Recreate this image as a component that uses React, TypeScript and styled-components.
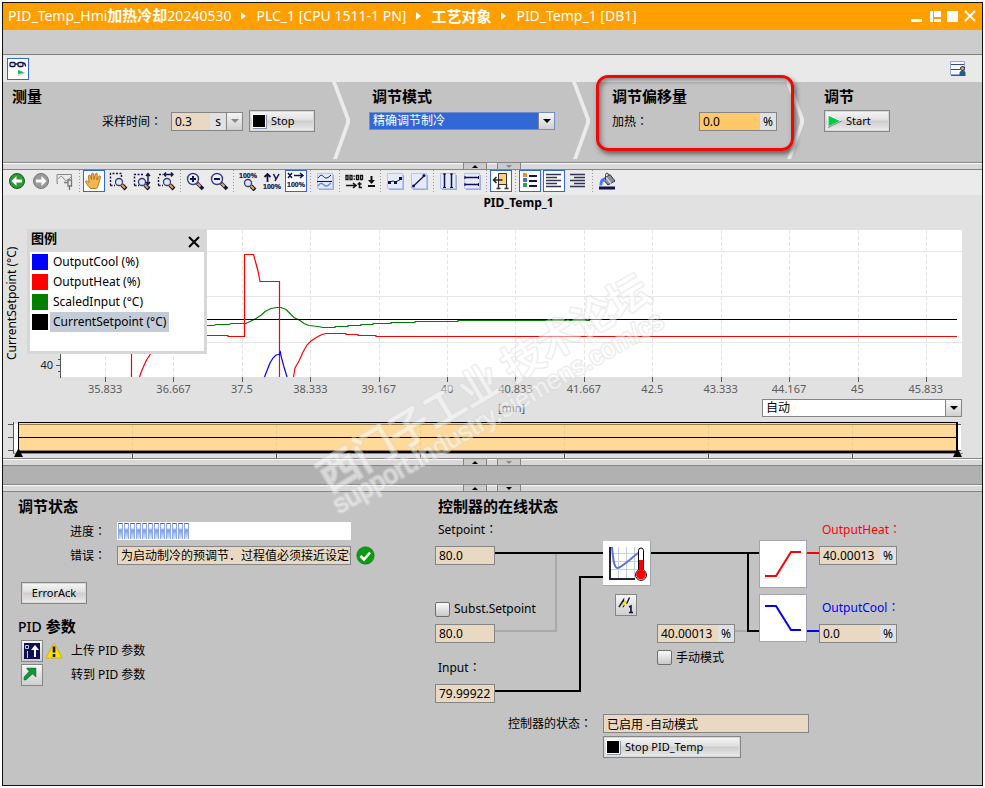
import React from "react";
import styled, { createGlobalStyle, css } from "styled-components";

const latin = `"Noto Sans", "Noto Sans CJK SC", sans-serif`;

const GlobalStyle = createGlobalStyle`
  * { box-sizing: border-box; }
  body { margin: 0; background: #fff; color: #000; font: 12px/16px ${latin}; }
  button, input, select { font: inherit; color: inherit; margin: 0; padding: 0; border-radius: 0; }
  svg { display: block; }
`;

/* ---------- frame ---------- */
const Frame = styled.main`
  position: relative;
  display: flex;
  flex-direction: column;
  margin: 2px;
  min-height: calc(100vh - 4px);
  border: 1px solid #111;
  background: #c3c3c3;
  overflow: hidden;
`;
const Page = styled.div`
  display: flow-root;
`;
const TitleBar = styled.header`
  display: flex;
  align-items: center;
  height: 27px;
  padding: 0 3px 2px 5px;
  background: #ff9f00;
  color: #fff;
  font-size: 14px;
  white-space: nowrap;
`;
const Crumbs = styled.nav`
  display: flex;
  align-items: center;
  gap: 10px;
  flex: 1;
`;
const Cjk = styled.span`
  font-size: 15px;
  font-weight: 700;
`;
const WindowButtons = styled.div`
  display: flex;
  gap: 2px;
`;
const WindowButton = styled.button`
  width: 16px;
  height: 16px;
  border: 0;
  background: none;
`;
const MenuStrip = styled.div`
  height: 25px;
  background: #ccc;
  border-bottom: 1px solid #808080;
`;
const TopTools = styled.div`
  display: flex;
  justify-content: space-between;
  align-items: center;
  height: 27px;
  padding: 0 16px 0 4px;
  background: #e9e9e9;
`;

/* ---------- shared controls ---------- */
const ToolButton = styled.button<{ $on?: boolean; $narrow?: boolean }>`
  flex: none;
  display: grid;
  place-items: center;
  width: ${(p) => (p.$narrow ? 10 : 22)}px;
  height: 22px;
  border: 1px solid ${(p) => (p.$on ? "#3168d5" : "transparent")};
  background: ${(p) => (p.$on ? "#fff" : "none")};
`;
const PushButton = styled.button<{ $w: number }>`
  display: flex;
  align-items: center;
  gap: 4px;
  width: ${(p) => p.$w}px;
  height: 22px;
  padding: 0 2px;
  border: 1px solid #858585;
  background: linear-gradient(#f6f6f6, #e0e0e0 45%, #cdcdcd 50%, #ececec);
  box-shadow: inset 0 0 0 1px #d8d8d8;
  font-size: 11px;
  white-space: nowrap;
`;
const CenterButton = styled(PushButton)`
  justify-content: center;
`;
const SmallButton = styled.button`
  display: grid;
  place-items: center;
  width: 22px;
  height: 22px;
  border: 1px solid #858585;
  background: linear-gradient(#f6f6f6, #cfcfcf);
`;
const Field = styled.span<{ $w: number; $hot?: boolean }>`
  display: flex;
  flex: none;
  width: ${(p) => p.$w}px;
  height: 19px;
  border: 1px solid #858585;
  background: ${(p) => (p.$hot ? "#ffc869" : "#ead9c2")};
  input {
    flex: 1;
    min-width: 0;
    width: 0;
    height: 17px;
    padding: 0 0 0 3px;
    border: 0;
    background: none;
    outline: 0;
  }
`;
const Unit = styled.span`
  width: 16px;
  text-align: center;
  background: #e1e1e1;
  line-height: 17px;
`;
const DropButton = styled.button`
  display: grid;
  place-items: center;
  width: 16px;
  border: 0;
  border-left: 1px solid #858585;
  background: linear-gradient(#f4f4f4, #d0d0d0);
`;
const SelectBox = styled.span<{ $w: number; $blue?: boolean }>`
  position: relative;
  display: block;
  width: ${(p) => p.$w}px;
  height: 18px;
  select {
    appearance: none;
    width: 100%;
    height: 100%;
    padding: 0 20px 0 3px;
    border: 1px solid #858585;
    background: #fff;
    line-height: 16px;
    outline: 0;
    ${(p) =>
      p.$blue &&
      css`
        border-color: #6f8fd0;
        background: #3168d5;
        color: #fff;
      `}
  }
  > span {
    position: absolute;
    top: 1px;
    right: 1px;
    bottom: 1px;
    width: 16px;
    display: grid;
    place-items: center;
    border-left: 1px solid #858585;
    background: linear-gradient(#f8f8f8, #d0d0d0);
    pointer-events: none;
  }
`;
const Heading = styled.h2`
  margin: 0;
  font-size: 15px;
  line-height: 20px;
  font-weight: 700;
  white-space: nowrap;
`;
const Light = styled.span`
  font-size: 14px;
  font-weight: 500;
`;
const Label = styled.label<{ $color?: string }>`
  color: ${(p) => p.$color || "#000"};
  white-space: nowrap;
`;
const ColonMark = styled.span`
  font-family: "Noto Sans CJK TC", sans-serif;
`;
const Check = styled.input.attrs({ type: "checkbox" })`
  appearance: none;
  width: 15px;
  height: 15px;
  border: 1px solid #6e6e6e;
  border-radius: 2px;
  background: linear-gradient(#fafafa, #c8c8c8);
`;
const Colon = () => <ColonMark>：</ColonMark>;
const Down = ({ c = "#000" }: { c?: string }) => (
  <svg width="8" height="4" viewBox="0 0 8 4">
    <path d="M0 0h8L4 4z" fill={c} />
  </svg>
);

/* ---------- configuration strip ---------- */
const ConfigStrip = styled.section`
  display: flex;
  height: 80px;
  background: #c3c3c3;
`;
const Step = styled.div<{ $w?: number; $pad: number }>`
  position: relative;
  flex: ${(p) => (p.$w ? `0 0 ${p.$w}px` : "1")};
  padding: 4px 0 0 ${(p) => p.$pad}px;
`;
const StepRow = styled.div<{ $indent?: number }>`
  display: flex;
  align-items: center;
  height: 22px;
  margin-top: 4px;
  padding-left: ${(p) => p.$indent || 0}px;
`;
const ModeBlock = styled.div`
  ${Heading} { padding-left: 3px; }
`;
const LabelCell = styled.div<{ $w: number }>`
  width: ${(p) => p.$w}px;
`;
const Spacer = styled.span`
  width: 6px;
`;
const Callout = styled.div`
  position: absolute;
  left: 4px;
  top: -7px;
  width: 198px;
  height: 76px;
  border: 3px solid #f00808;
  border-radius: 12px;
  box-shadow: 2px 3px 5px rgba(0, 0, 0, 0.5), inset 2px 3px 5px rgba(0, 0, 0, 0.4);
  pointer-events: none;
`;
const Chevron = () => (
  <svg width="20" height="80" viewBox="0 0 20 80">
    <path d="M0 0h4l14 37v4L5 77H1l13-36v-4z" fill="#ebebeb" />
  </svg>
);

/* ---------- splitter ---------- */
const SplitBar = styled.div`
  display: flex;
  gap: 10px;
  height: 8px;
  padding-left: 460px;
  border-top: 1px solid #858585;
  border-bottom: 1px solid #858585;
  background: #d9d9d9;
  box-shadow: inset 0 1px #fff;
`;
const SplitTab = styled.button`
  display: grid;
  place-items: center;
  width: 24px;
  height: 6px;
  border: solid #858585;
  border-width: 0 1px;
  background: #cbcbcb;
`;
const Splitter = ({ both }: { both?: boolean }) => (
  <SplitBar>
    <SplitTab aria-label="Collapse">
      <svg width="6" height="3"><path d="M0 3h6L3 0z" /></svg>
    </SplitTab>
    <SplitTab aria-label="Expand">
      <svg width="6" height="3"><path d="M0 0h6L3 3z" fill={both ? "#000" : "#888"} /></svg>
    </SplitTab>
  </SplitBar>
);
const GrayBand = styled.div`
  height: 18px;
  background: #b1b1b1;
`;

/* ---------- chart ---------- */
const ChartTools = styled.div`
  display: flex;
  align-items: flex-start;
  gap: 2px;
  height: 25px;
  padding-left: 3px;
  background: #ebebeb;
`;
const Sep = styled.i`
  width: 3px;
  height: 24px;
  background: repeating-linear-gradient(#999 0 1px, transparent 1px 3px) center / 1px 100% no-repeat;
`;
const ChartPanel = styled.section`
  height: 263px;
  background: #e1e1e1;
`;
const ChartTitle = styled.h3`
  margin: 0;
  height: 35px;
  padding: 0 0 0 52px;
  text-align: center;
  font-size: 12px;
  line-height: 15px;
  font-weight: 700;
`;
const PlotRow = styled.div`
  position: relative;
  display: flex;
  height: 152px;
  padding-right: 20px;
`;
const Gutter = styled.div`
  display: flex;
  width: 58px;
`;
const AxisName = styled.div`
  writing-mode: vertical-rl;
  transform: rotate(180deg);
  width: 17px;
  height: 146px;
  text-align: center;
  line-height: 17px;
  white-space: nowrap;
`;
const AxisTick = styled.div`
  align-self: flex-end;
  display: flex;
  flex: 1;
  align-items: center;
  justify-content: flex-end;
  gap: 2px;
  height: 34px;
  font-size: 11px;
  color: #222;
`;
const Plot = styled.svg`
  flex: 1;
  min-width: 0;
  height: 152px;
`;
const TickLabels = styled.div`
  display: grid;
  grid-template-columns: repeat(13, 1fr);
  margin: 0 22px 0 68px;
  height: 16px;
  text-align: center;
  font-size: 11px;
  line-height: 14px;
  color: #5c5c5c;
`;
const BelowAxis = styled.div`
  display: grid;
  grid-template-columns: 1fr auto 1fr;
  align-items: center;
  height: 20px;
  padding: 0 20px 0 58px;
  color: #5c5c5c;
  font-size: 11px;
  > :last-child { justify-self: end; color: #000; font-size: 12px; }
`;
const Overview = styled.svg`
  width: calc(100% - 24px);
  height: 37px;
  margin: 3px 0 0 5px;
`;
const Legend = styled.aside`
  position: absolute;
  left: 24px;
  top: -1px;
  width: 180px;
  height: 125px;
  border: 3px solid #d7d7d7;
  background: #fff;
`;
const LegendHead = styled.div`
  display: flex;
  justify-content: space-between;
  height: 20px;
  padding: 0 4px 0 1px;
  background: #d7d7d7;
  font-size: 13px;
  font-weight: 700;
  line-height: 12px;
  button { border: 0; background: none; height: 20px; }
`;
const LegendItem = styled.div<{ $c: string; $on?: boolean }>`
  display: flex;
  align-items: center;
  height: 20px;
  padding-left: 2px;
  gap: 2px;
  &::before { content: ""; width: 16px; height: 16px; background: ${(p) => p.$c}; }
  span { padding: 2px 3px; ${(p) => p.$on && "background: #c3cbd6;"} }
`;

const ticksX = [105, 173, 242, 310, 379, 447, 515, 584, 652, 721, 789, 858, 926];
const tickNames = ["35.833", "36.667", "37.5", "38.333", "39.167", "40", "40.833", "41.667", "42.5", "43.333", "44.167", "45", "45.833"];
const series = [
  { c: "#007f00", d: "M206 325.5L214 325.5 216 324.5 229 324.5 231 323.5 246 323.5 248 322.5 256 318.5 262 314.5 265 311.5 271 308.5 277 307.5 281 307.5 286 309.5 290 313.5 294 317.5 300 320.5 304 323.5 309 325.5 318 326.5 323 327.5 335 327.5V326.5H348V325.5H361V324.5H373V323.5H391V322.5H415V321.5H458V320.5H590" },
  { c: "#000", d: "M206 319.5H957" },
  { c: "#f00", d: "M131.5 350V377M139.5 377L142 370 146 361 151 353M206 335.5H228V336.5H244.5V254.5H253.5L255 260 258 271 260 281.5H279.5V377M293.5 377L295 368 299 361 303 352 307 345 311 341 317 337 322 334.5 326 333.5H346V334.5H358V335.5H376V336.5H957" },
  { c: "#00f", d: "M264.5 377L268 368 270 363 273 358 276 355 279 354.5 280.5 352 281 356 284 367 287 377" },
];

const Trend = () => (
  <Plot viewBox="61 230 901 152" preserveAspectRatio="none" role="img" aria-label="PID_Temp_1">
    <rect x="61" y="230" width="901" height="147" fill="#fff" />
    <g stroke="#e6e6e6" fill="none">
      <path d="M61 251.5H962M61 296.5H962M61 342.5H962" />
      {ticksX.map((x) => <path key={x} d={`M${x + 0.5} 230V377`} strokeDasharray="4 2" />)}
    </g>
    {ticksX.map((x) => <path key={x} d={`M${x + 0.5} 377V382`} stroke="#555" />)}
    {series.map((s) => <path key={s.c} d={s.d} stroke={s.c} fill="none" vectorEffect="non-scaling-stroke" strokeWidth="1.2" />)}
  </Plot>
);

const OverviewStrip = () => (
  <Overview viewBox="8 421 955 37" preserveAspectRatio="none">
    <path d="M14 424H961V451H14z" fill="#fff" />
    <path d="M13.5 422V453M8 424.5H14M8 437.5H14M8 450.5H14M957 424.5H961M957 450.5H961" stroke="#555" fill="none" />
    <path d="M18 422H957V451H18z" fill="#ffd997" />
    {[132, 276, 420, 564, 708, 852].map((x) => (
      <g key={x} fill="none">
        <path d={`M${x + 0.5} 424V451`} stroke="#f0c98c" strokeDasharray="4 2" />
        <path d={`M${x + 0.5} 453V458`} stroke="#555" />
      </g>
    ))}
    <path d="M18 424.5H957M18 450.5H957" stroke="#9a7848" />
    <path d="M13 453.5H963" stroke="#888" />
    <path d="M18 422.5H957M18 437.5H957M18.5 422V452" stroke="#000" />
    <path d="M18 452H957M957 422V452" stroke="#000" strokeWidth="2" />
    <path d="M14 457l4.500-9 4.500 9zM953 457l4.500-9 4.500 9z" />
  </Overview>
);

/* ---------- toolbar icons ---------- */
const Ico = ({ children }: { children: React.ReactNode }) => (
  <svg width="20" height="20" viewBox="0 0 20 20" fill="none" stroke="#12124a">{children}</svg>
);
const Percent = ({ x, y }: { x: number; y: number }) => (
  <text x={x} y={y} fontFamily="Liberation Sans" fontWeight="700" fontSize="7" fill="#12124a" stroke="#12124a" strokeWidth="0.2">100%</text>
);
const Lens = ({ x, y }: { x: number; y: number }) => (
  <g transform={`translate(${x} ${y})`}>
    <path d="M3 3l4 4" stroke="#12124a" strokeWidth="4" />
    <path d="M3 3l3 3" stroke="#e2a52c" strokeWidth="2.200" />
    <circle r="3.500" fill="#dce9fb" stroke="#3b3b6d" strokeWidth="1.300" />
  </g>
);
const Magnify = ({ plus }: { plus?: boolean }) => (
  <Ico>
    <path d="M12 12l6 6" stroke="#12124a" strokeWidth="3.600" />
    <path d="M12.500 12.500l3 3" stroke="#e2a52c" strokeWidth="2.400" />
    <circle cx="8" cy="8" r="5.500" fill="#e8f0fc" stroke="#3b3b7d" strokeWidth="1.400" />
    <path d={plus ? "M5 8h6M8 5v6" : "M5 8h6"} strokeWidth="2" />
  </Ico>
);
const Arrow = ({ c, flip }: { c: string; flip?: boolean }) => (
  <Ico>
    <circle cx="10" cy="10" r="7.500" fill={c} stroke={flip ? "#777" : "#175c17"} />
    <path d={flip ? "M15.500 10L10.500 5v3.500H5v3h5.500V15z" : "M4.500 10L9.500 5v3.500h5.500v3h-5.500V15z"} fill="#fff" stroke="none" />
  </Ico>
);
const Tile = () => (
  <>
    <path d="M4 4h15v15H4z" fill="#a5acd0" stroke="none" />
    <path d="M2.500 2.500h15v15h-15z" fill="#e3ebfc" stroke="#b4c4ee" />
  </>
);
const GlassesIcon = () => (
  <Ico>
    <rect x="2" y="3.500" width="5" height="4" rx="1" fill="#dfe6fa" strokeWidth="1.300" />
    <rect x="10" y="3.500" width="5" height="4" rx="1" fill="#dfe6fa" strokeWidth="1.300" />
    <path d="M7 5h3M15 4c2 0 2.500 1 2.500 3.500" strokeWidth="1.300" />
    <path d="M10 11l8 3-8 3z" fill="#ccc" stroke="none" />
    <path d="M10 11l6 2.500-6 1.500z" fill="#0dbb55" stroke="none" />
  </Ico>
);
const tools: Array<{ n: string; on?: boolean; narrow?: boolean; icon: React.ReactNode } | null> = [
  { n: "Back", icon: <Arrow c="#2f9a35" /> },
  { n: "Forward", icon: <Arrow c="#9a9a9a" flip /> },
  { n: "Pin curve", icon: <Ico><path d="M3 12.500H2V3.500h14.500V8M3 8c3-4 4-3 6 0s4 1 7-2" stroke="#888" /><path d="M9 11.500h4M13 9v6h3.500V9zM14.500 15v4" stroke="#777" strokeWidth="1.300" /></Ico> },
  null,
  { n: "Move view", on: true, icon: <Ico><path d="M6.500 17.500C4 14.500 2 12.500 1.500 10.500c.7-1 2-.7 3.500 1L4.500 5c.1-1.300 1.600-1.300 2 0l1 3.500L7.700 3c.2-1.300 1.800-1.300 2 0l.3 5.500L11.500 3c.4-1.300 1.900-1 1.900.4L12.800 9l1.900-3.500c.7-1.200 2.200-.5 1.800.7L14.500 13c-.3 2-1 3.500-2 4.500z" fill="#f4b64f" stroke="#a96d17" strokeWidth=".9" /></Ico> },
  { n: "Zoom area", icon: <Ico><path d="M2.500 14.500V2.500H13.500V7M2.500 14.500H7" strokeDasharray="2 1.500" strokeWidth="1.400" /><Lens x={11} y={11} /></Ico> },
  { n: "Zoom vertical", icon: <Ico><path d="M2.500 14.500V3.500H12M2.500 14.500H7" strokeDasharray="2 1.500" strokeWidth="1.400" /><Lens x={10} y={11} /><path d="M16 3v10M14 5l2-2.500L18 5M14 11l2 2.500 2-2.500" strokeWidth="1.400" /></Ico> },
  { n: "Zoom horizontal", icon: <Ico><path d="M2.500 14.500V6M2.500 14.500H7M3 3.500h4" strokeDasharray="2 1.500" strokeWidth="1.400" /><Lens x={11} y={11} /><path d="M8 3.500h9M10 1.500L8 3.500l2 2M15 1.500l2 2-2 2" strokeWidth="1.400" /></Ico> },
  null,
  { n: "Zoom in", icon: <Magnify plus /> },
  { n: "Zoom out", icon: <Magnify /> },
  null,
  { n: "Zoom 100%", icon: <Ico><Percent x={1} y={7} /><Lens x={10} y={12} /></Ico> },
  { n: "Y 100%", icon: <Ico><path d="M5.500 11V4M2.500 6l3-3 3 3" strokeWidth="1.800" /><path d="M11.500 3l2.500 5M17 3l-4 7" strokeWidth="1.500" /><Percent x={1} y={18} /></Ico> },
  { n: "X 100%", on: true, icon: <Ico><path d="M2 2l4 5M6 2L2 7M8 4.500h8M14 2l3 2.500L14 7" strokeWidth="1.500" /><Percent x={1} y={16} /></Ico> },
  null,
  { n: "Curves", icon: <Ico><Tile /><path d="M3 7c3-4 4-3 6-1s4 1 7-2" /><path d="M2 10.500h15" stroke="#12124a" /><path d="M3 15c3-4 4-3 6-1s4 1 7-2" stroke="#6a8ae6" strokeWidth="1.400" /></Ico> },
  null,
  { n: "Time axis", icon: <Ico><path d="M2 4.500v4h2v-4zM6 4.500v4h2v-4zM12.500 4.500v4h2v-4zM16.500 4.500v4h2v-4z" stroke="#111" strokeWidth="1.300" /><path d="M10.300 4.500v1.200M10.300 7.500v1.200M2 14.500h9M9 12l3 2.500L9 17M15.500 11v5.500h2.500M13.500 13h4" stroke="#111" strokeWidth="1.600" /></Ico> },
  { n: "Time marker", narrow: true, icon: <svg width="8" height="20" viewBox="0 0 8 20"><path d="M2.500 5h2v4H7l-3.500 4L0 9h2.500zM0 14h7v2H0z" fill="#111" /></svg> },
  null,
  { n: "Interpolate points", icon: <Ico><Tile /><path d="M4 11l4-1 3 1 5-3" /><path d="M3 10h3v3H3zM9 10h3v3H9zM14 6h3v3h-3z" fill="#12124a" stroke="none" /></Ico> },
  { n: "Interpolate line", icon: <Ico><Tile /><path d="M4.500 15L15 5" strokeWidth="1.300" /><circle cx="4.500" cy="15" r="1.500" fill="#12124a" stroke="none" /><circle cx="15" cy="4.500" r="1.500" fill="#12124a" stroke="none" /></Ico> },
  null,
  { n: "Vertical cursors", icon: <Ico><Tile /><path d="M6.500 2.500v14M13.500 2.500v14" strokeWidth="1.500" /><path d="M5 3h3M12 3h3M5 16.500h3M12 16.500h3" /></Ico> },
  { n: "Horizontal cursors", icon: <Ico><Tile /><path d="M2.500 6.500h14M2.500 13.500h14" strokeWidth="1.500" /><path d="M3 5v3M16.500 5v3M3 12v3M16.500 12v3" /></Ico> },
  null,
  { n: "Dock legend", on: true, icon: <Ico><path d="M7.500 2.500h8v11h-8z" fill="#ffcf83" stroke="#333" /><path d="M7.500 13v4M15.500 13v4M5.500 17.500h4M13.500 17.500h4" stroke="#333" strokeWidth="1.400" /><path d="M2.500 9h9M5.500 6L2.500 9l3 3" stroke="#222" strokeWidth="1.500" /></Ico> },
  null,
  { n: "Legend", on: true, icon: <Ico><path d="M3 2h4v4H3z" fill="#f68a1e" stroke="none" /><path d="M3 7h4v4H3z" fill="#2b7be0" stroke="none" /><path d="M3 12h4v4H3z" fill="#27a353" stroke="none" /><path d="M9 5h8M9 10h8M9 15h8" strokeWidth="2" /></Ico> },
  { n: "Align left", on: true, icon: <Ico><path d="M2 3.500h15M2 6.500h11M2 9.500h15M2 12.500h11M2 15.500h15" stroke="#333355" strokeWidth="1.400" /></Ico> },
  { n: "Align right", icon: <Ico><path d="M2 3.500h15M6 6.500h11M2 9.500h15M6 12.500h11M2 15.500h15" stroke="#333355" strokeWidth="1.400" /></Ico> },
  null,
  { n: "Background colour", icon: <Ico><path d="M2 17h16" strokeWidth="3" /><path d="M6 8l7-4.500 5 6.500-7 4z" fill="#8a8f9c" stroke="#33384a" /><path d="M9 6.500l5 6" stroke="#d5d8e0" strokeWidth="1.400" /><path d="M8.500 9V4.500q0-2.500 1.500-2.500t1.500 2.500" stroke="#444" /><path d="M7 7C3.500 7.500 3 9 2.500 14.500h2.500C5.500 11.500 6 10.500 8.500 10z" fill="#4d77ee" stroke="none" /></Ico> },
];

/* ---------- status panels ---------- */
const Bottom = styled.div`
  display: flex;
  flex: 1;
`;
const StatusColumn = styled.section`
  width: 432px;
  padding: 4px 0 0 15px;
`;
const StatusRows = styled.div`
  margin-top: 3px;
`;
const StatusRow = styled.div`
  display: grid;
  grid-template-columns: 99px 234px 24px;
  align-items: center;
  height: 24px;
  > label, > span:first-child { padding-left: 52px; white-space: nowrap; }
  > svg { justify-self: end; }
`;
const Progress = styled.div`
  display: flex;
  gap: 1px;
  height: 18px;
  padding: 1px;
  background: #fff;
  i { width: 5px; border: solid #8eaae6; border-width: 1px 1px 0; border-top-color: #3168d5; background: linear-gradient(#fff 0 25%, #7a9ce4 40%, #dfe8fb); }
`;
const AckRow = styled.div`
  margin: 15px 0 12px 3px;
`;
const Actions = styled.div`
  margin-top: 2px;
`;
const ActionRow = styled.div`
  display: flex;
  align-items: center;
  height: 24px;
  padding-left: 3px;
`;
const ActionLabel = styled.span<{ $gap: number }>`
  margin-left: ${(p) => p.$gap}px;
`;
const Diagram = styled.section`
  position: relative;
  flex: 1;
`;
const Node = styled.div<{ $x: number; $y: number }>`
  position: absolute;
  left: ${(p) => p.$x}px;
  top: ${(p) => p.$y}px;
  display: flex;
  align-items: center;
`;
const Wires = styled.svg`
  position: absolute;
  left: 0;
  top: 0;
`;
const Block = styled.div`
  width: 48px;
  height: 48px;
  border: 1px solid #a3a3b5;
  background: #fff;
`;
const Watermark = styled.svg`
  position: absolute;
  left: 295px;
  top: 255px;
  opacity: 0.5;
  pointer-events: none;
`;
const BlackSquare = () => (
  <svg width="15" height="15"><path d="M1 1h14v14H1z" fill="#8890a8" /><path d="M0 0h14v14H0z" fill="#fff" /><path d="M1 1h12v12H1z" /></svg>
);
const PlayIcon = () => (
  <svg width="15" height="15"><path d="M1 1l13 6-13 6z" fill="#06c946" stroke="#fff" /><path d="M1 13.500L14.500 7" stroke="#777" /></svg>
);
const CrumbArrow = () => (
  <svg width="5" height="8"><path d="M0 0l5 4-5 4z" fill="#fff" /></svg>
);

export default function App() {
  return (
    <Page>
      <GlobalStyle />
      <Frame>
        <TitleBar>
          <Crumbs>
            <span>PID_Temp_Hmi<Cjk>加热冷却</Cjk>20240530</span>
            <CrumbArrow />
            <span>PLC_1 [CPU 1511-1 PN]</span>
            <CrumbArrow />
            <Cjk>工艺对象</Cjk>
            <CrumbArrow />
            <span>PID_Temp_1 [DB1]</span>
          </Crumbs>
          <WindowButtons>
            <WindowButton aria-label="Minimize"><svg width="16" height="16"><path d="M2 11h11v3H2z" fill="#fff" /></svg></WindowButton>
            <WindowButton aria-label="Float"><svg width="16" height="16"><path d="M3 3h3v11H3zM7 3h7v6H7zM7 11h7v3H7z" fill="#fff" /></svg></WindowButton>
            <WindowButton aria-label="Maximize"><svg width="16" height="16"><path d="M2 3h11v11H2z" fill="#fff" /></svg></WindowButton>
            <WindowButton aria-label="Close"><svg width="16" height="16"><path d="M2 3l10 10M12 3L2 13" stroke="#fff" strokeWidth="2" /></svg></WindowButton>
          </WindowButtons>
        </TitleBar>
        <MenuStrip />
        <TopTools>
          <ToolButton $on aria-label="Monitor"><GlassesIcon /></ToolButton>
          <svg width="16" height="16">
            <path d="M.5 .5h14v13H.5z" fill="#f5f8ff" stroke="#98a5d8" />
            <path d="M1 3.500h13M1 8.500h9" stroke="#3c4b70" /><path d="M1 14.500h14" stroke="#556" />
            <circle cx="12.500" cy="7.500" r="2" fill="#d9a860" stroke="#222" />
            <path d="M9.500 15v-3c0-3 6-3 6 0v3z" fill="#225b8e" />
          </svg>
        </TopTools>

        <ConfigStrip>
          <Step $w={329} $pad={9}>
            <Heading>测量</Heading>
            <StepRow $indent={90}>
              <LabelCell $w={69}><Label htmlFor="cycle">采样时间<Colon /></Label></LabelCell>
              <Field $w={72}>
                <input id="cycle" defaultValue="0.3" />
                <Unit>s</Unit>
                <DropButton aria-label="Choose time"><Down c="#888" /></DropButton>
              </Field>
              <Spacer />
              <PushButton $w={66}><BlackSquare />Stop</PushButton>
            </StepRow>
          </Step>
          <Chevron />
          <Step $w={220} $pad={17}>
            <ModeBlock>
              <Heading>调节模式</Heading>
              <StepRow>
                <SelectBox $w={186} $blue>
                  <select aria-label="调节模式"><option>精确调节制冷</option></select>
                  <span><Down /></span>
                </SelectBox>
              </StepRow>
            </ModeBlock>
          </Step>
          <Chevron />
          <Step $w={194} $pad={20}>
            <Callout />
            <Heading>调节偏移量</Heading>
            <StepRow>
              <LabelCell $w={87}><Label htmlFor="offset">加热<Colon /></Label></LabelCell>
              <Field $w={78} $hot><input id="offset" defaultValue="0.0" /><Unit>%</Unit></Field>
            </StepRow>
          </Step>
          <Chevron />
          <Step $pad={18}>
            <Heading>调节</Heading>
            <StepRow>
              <PushButton $w={66}><PlayIcon />Start</PushButton>
            </StepRow>
          </Step>
        </ConfigStrip>

        <Splitter />
        <ChartTools>
          {tools.map((t, i) =>
            t ? <ToolButton key={t.n} $on={t.on} $narrow={t.narrow} aria-label={t.n}>{t.icon}</ToolButton> : <Sep key={i} />
          )}
        </ChartTools>
        <ChartPanel>
          <ChartTitle>PID_Temp_1</ChartTitle>
          <PlotRow>
            <Gutter>
              <AxisName>CurrentSetpoint (°C)</AxisName>
              <AxisTick>
                <span>40</span>
                <svg width="6" height="34"><path d="M5.500 0V30M1 17.500H6M3 11.500H6M3 23.500H6" stroke="#555" /></svg>
              </AxisTick>
            </Gutter>
            <Trend />
            <Legend>
              <LegendHead>
                图例
                <button aria-label="Close legend"><svg width="12" height="12"><path d="M1 1l10 10M11 1L1 11" stroke="#000" strokeWidth="2" /></svg></button>
              </LegendHead>
              <LegendItem $c="#00f"><span>OutputCool (%)</span></LegendItem>
              <LegendItem $c="#f00"><span>OutputHeat (%)</span></LegendItem>
              <LegendItem $c="#008000"><span>ScaledInput (°C)</span></LegendItem>
              <LegendItem $c="#000" $on><span>CurrentSetpoint (°C)</span></LegendItem>
            </Legend>
          </PlotRow>
          <TickLabels>{tickNames.map((t) => <span key={t}>{t}</span>)}</TickLabels>
          <BelowAxis>
            <span />
            <span>[min]</span>
            <SelectBox $w={200}>
              <select aria-label="Time range"><option>自动</option></select>
              <span><Down /></span>
            </SelectBox>
          </BelowAxis>
          <OverviewStrip />
        </ChartPanel>
        <Splitter />
        <GrayBand />
        <Splitter both />

        <Bottom>
          <StatusColumn>
            <Heading>调节状态</Heading>
            <StatusRows>
              <StatusRow>
                <span>进度<Colon /></span>
                <Progress role="progressbar" aria-label="进度" aria-valuenow={31}>
                  {Array.from({ length: 12 }, (_, i) => <i key={i} />)}
                </Progress>
              </StatusRow>
              <StatusRow>
                <Label htmlFor="error">错误<Colon /></Label>
                <Field $w={234}><input id="error" readOnly value="为启动制冷的预调节．过程值必须接近设定值" /></Field>
                <svg width="19" height="19">
                  <circle cx="9.500" cy="9.500" r="8.700" fill="#0a9d12" stroke="#08750d" strokeWidth=".6" />
                  <path d="M4.500 10l3.500 3.500 6-7" stroke="#fff" strokeWidth="2.600" fill="none" />
                </svg>
              </StatusRow>
            </StatusRows>
            <AckRow><CenterButton $w={66}>ErrorAck</CenterButton></AckRow>
            <Heading><Light>PID</Light> 参数</Heading>
            <Actions>
              <ActionRow>
                <SmallButton aria-label="上传 PID 参数">
                  <svg width="18" height="18"><path d="M1 1h16v16H1z" fill="#10104e" /><path d="M12 15V7" stroke="#fff" strokeWidth="2" /><path d="M8 8l4-5 4 5z" fill="#fff" /><path d="M2.500 3.500h3v3h-3zM4.500 9v7" stroke="#bcc5f5" fill="none" /></svg>
                </SmallButton>
                <svg width="20" height="20">
                  <path d="M11 2L19 17H3z" fill="#ffe100" stroke="#d8b200" strokeLinejoin="round" />
                  <path d="M11 5.500v6M11 13v3" stroke="#10104e" strokeWidth="2.600" />
                </svg>
                <ActionLabel $gap={8}>上传 PID 参数</ActionLabel>
              </ActionRow>
              <ActionRow>
                <SmallButton aria-label="转到 PID 参数">
                  <svg width="18" height="18"><path d="M1 14V11L6 5.500 3.500 2H13v9L9.500 8 3 14z" fill="#15933c" stroke="#0b6b29" strokeWidth=".5" /></svg>
                </SmallButton>
                <ActionLabel $gap={28}>转到 PID 参数</ActionLabel>
              </ActionRow>
            </Actions>
          </StatusColumn>

          <Diagram>
            <Wires width="480" height="290" fill="none" strokeWidth="2" stroke="#000">
              <path d="M121 62V139H60M300 139h13" stroke="#a9a9a9" />
              <path d="M60 61H168M60 199H145V85H168M216 61H324M313 61V139H324" />
              <path d="M372 61H384" stroke="#f00" />
              <path d="M372 139H384" stroke="#00f" />
            </Wires>
            <Node $x={3} $y={4}><Heading>控制器的在线状态</Heading></Node>
            <Node $x={3} $y={29}><Label htmlFor="sp">Setpoint<Colon /></Label></Node>
            <Node $x={0} $y={54}><Field $w={60}><input id="sp" readOnly value="80.0" /></Field></Node>
            <Node $x={0} $y={110}><Check id="subst" /></Node>
            <Node $x={19} $y={109}><Label htmlFor="subst">Subst.Setpoint</Label></Node>
            <Node $x={0} $y={132}><Field $w={60}><input aria-label="Subst.Setpoint" readOnly value="80.0" /></Field></Node>
            <Node $x={3} $y={167}><Label htmlFor="in">Input<Colon /></Label></Node>
            <Node $x={0} $y={192}><Field $w={60}><input id="in" readOnly value="79.99922" /></Field></Node>
            <Node $x={168} $y={49}>
              <svg width="48" height="45">
                <path d="M0 0h48v45H0z" fill="#9aa" /><path d="M0 0h47v44H0z" fill="#fff" />
                <path d="M15.500 6v32M23.500 6v32M31.500 6v32M8 12.500h28M8 20.500h28M8 28.500h28" stroke="#c5cfe2" />
                <path d="M9 6c1 12 2 21 5.500 21S26 19 35 12" fill="none" stroke="#6070dc" strokeWidth="2" />
                <path d="M7 6v32h25" fill="none" stroke="#24243c" strokeWidth="2" />
                <path d="M35.500 29V9.500q0-2.500 2.500-2.500t2.500 2.500V29a5.500 5.500 0 1 1-5 0z" fill="#fff" stroke="#000" />
                <path d="M38 19v12" stroke="#f00" strokeWidth="4" /><circle cx="38" cy="33.500" r="4.800" fill="#f00" />
              </svg>
            </Node>
            <Node $x={180} $y={102}>
              <SmallButton aria-label="Tuning step">
                <svg width="20" height="20"><path d="M3 12l4.500-7v6L11 6.500M8 9.500l3-1.500L13.500 2.500" stroke="#111140" strokeWidth="1.400" fill="none" /><path d="M7 7l4-1-1 4-4 1z" fill="#ffe600" /><path d="M13 12l2-1v7M13 17.500h4" stroke="#111140" strokeWidth="1.600" fill="none" /></svg>
              </SmallButton>
            </Node>
            <Node $x={324} $y={48}><Block><svg width="46" height="46"><path d="M5 35H16L31 11H41" stroke="#f00" strokeWidth="2" fill="none" /></svg></Block></Node>
            <Node $x={324} $y={102}><Block><svg width="46" height="46"><path d="M5 11H16L31 35H41" stroke="#00f" strokeWidth="2" fill="none" /></svg></Block></Node>
            <Node $x={387} $y={29}><Label htmlFor="heat" $color="#f00">OutputHeat<Colon /></Label></Node>
            <Node $x={384} $y={54}><Field $w={78}><input id="heat" readOnly value="40.00013" /><Unit>%</Unit></Field></Node>
            <Node $x={387} $y={107}><Label htmlFor="cool" $color="#00f">OutputCool<Colon /></Label></Node>
            <Node $x={384} $y={132}><Field $w={78}><input id="cool" readOnly value="0.0" /><Unit>%</Unit></Field></Node>
            <Node $x={222} $y={132}><Field $w={78}><input aria-label="手动模式" readOnly value="40.00013" /><Unit>%</Unit></Field></Node>
            <Node $x={222} $y={158}><Check id="manual" /></Node>
            <Node $x={241} $y={158}><Label htmlFor="manual">手动模式</Label></Node>
            <Node $x={73} $y={223}><Label htmlFor="state">控制器的状态<Colon /></Label></Node>
            <Node $x={168} $y={222}><Field $w={206}><input id="state" readOnly value="已启用 -自动模式" /></Field></Node>
            <Node $x={168} $y={244}><PushButton $w={138}><BlackSquare />Stop PID_Temp</PushButton></Node>
          </Diagram>
        </Bottom>

        <Watermark width="400" height="280" aria-hidden="true">
          <g transform="translate(-298 -258)" fill="#fff" stroke="#ddd" strokeWidth="3" paintOrder="stroke" strokeLinejoin="round">
            <text transform="translate(329 493) rotate(-31)" fontFamily="Noto Sans CJK SC" fontWeight="500" fontSize="41">西门子工业 技术论坛</text>
            <text transform="translate(339 514) rotate(-30)" fontFamily="Liberation Sans" fontWeight="400" fontSize="26">support.industry.siemens.com/cs</text>
          </g>
        </Watermark>
      </Frame>
    </Page>
  );
}
